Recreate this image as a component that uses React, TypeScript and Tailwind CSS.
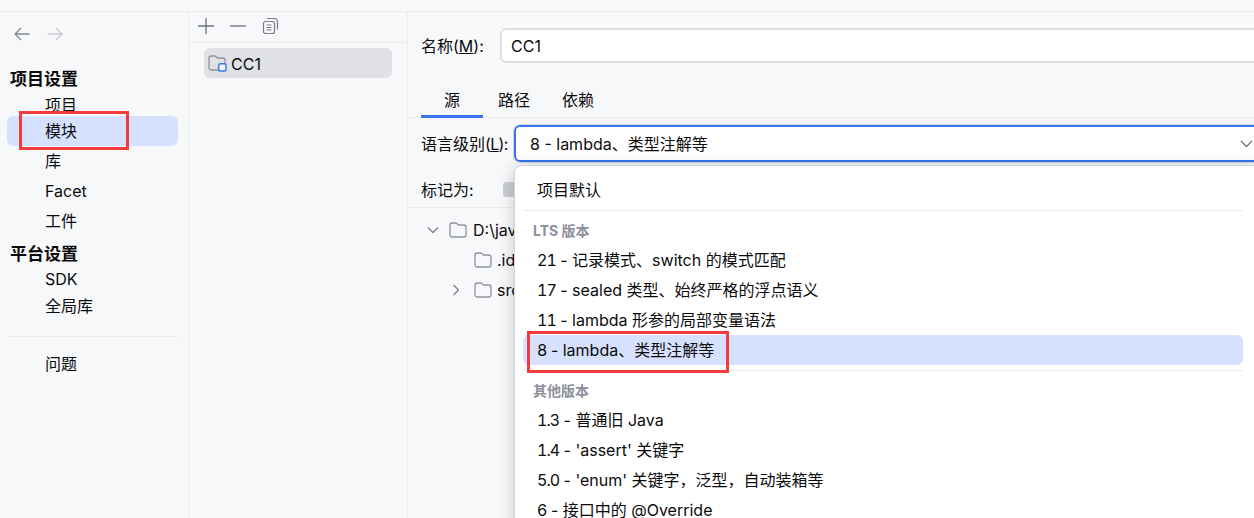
import React from "react";

function Folder({ badge = false }: { badge?: boolean }) {
  return (
    <svg width="19" height="17" viewBox="0 0 19 17" fill="none" className="shrink-0">
      <path d="M1 3.2C1 2 1.9 1 3.2 1h3.4c.6 0 1 .2 1.4.6L9.4 3h5.4C16.1 3 17 4 17 5.2v7.6c0 1.2-.9 2.2-2.2 2.2H3.2C1.9 15 1 14 1 12.8V3.2Z" stroke="#8f929e" strokeWidth="1.3" />
      {badge && <rect x="10.7" y="8.7" width="7.3" height="7.3" rx="1.8" fill="#f2f3f7" stroke="#3574f0" strokeWidth="1.4" />}
    </svg>
  );
}

function Row({ children, className = "" }: { children: React.ReactNode; className?: string }) {
  return <div className={`flex items-center mx-[7px] pl-[38px] ${className}`}>{children}</div>;
}

function Item({ num, children, className = "" }: { num?: string; children: React.ReactNode; className?: string }) {
  return (
    <div className={`h-[30px] flex items-center pl-[14px] whitespace-pre rounded-md ${className}`}>
      {num && <span className="tabular-nums tracking-[-1px]">{num}</span>}
      <span>{children}</span>
    </div>
  );
}

function Heading({ children }: { children: React.ReactNode }) {
  return <div className="h-[34px] pt-[5px] flex items-center pl-[10px] text-[14px] font-bold text-[#8c8f9a]">{children}</div>;
}

export default function App() {
  return (
    <div className="relative h-[518px] w-[1254px] overflow-hidden bg-[#f7f8fa] text-[16px] text-[#0b0b0c] [font-family:Inter,'Noto_Sans_CJK_SC',sans-serif]">
      <div className="h-[12px] border-b border-[#ebecf0]" />
      <div className="flex h-[506px]">
        {/* Sidebar */}
        <aside className="w-[189px] shrink-0 border-r border-[#ebecf0]">
          <div className="mt-[10px] h-6 flex items-center gap-[15px] pl-[13px]">
            <svg width="18" height="16" viewBox="0 0 18 16" fill="none" stroke="#858892" strokeWidth="1.3">
              <path d="M16.5 8H2M8 2 2 8l6 6" />
            </svg>
            <svg width="18" height="16" viewBox="0 0 18 16" fill="none" stroke="#c9ccd4" strokeWidth="1.3">
              <path d="M1.5 8H16M10 2l6 6-6 6" />
            </svg>
          </div>
          <div className="mt-[21px] h-6 pt-[2px] flex items-center pl-[10px] text-[17px] font-bold">项目设置</div>
          <Row className="h-[25px] pt-[2px]">项目</Row>
          <Row className="h-[30px] w-[171px] rounded-md bg-[#d5e1ff]">模块</Row>
          <Row className="h-[30px]">库</Row>
          <Row className="h-[30px]">Facet</Row>
          <Row className="h-[30px]">工件</Row>
          <div className="mt-[6px] h-6 pt-[2px] flex items-center pl-[10px] text-[17px] font-bold">平台设置</div>
          <Row className="h-[26px]">SDK</Row>
          <Row className="h-[28px]">全局库</Row>
          <div className="mt-[16px] mx-[7px] w-[171px] border-t border-[#ebecf0]" />
          <Row className="mt-[12px] h-[30px]">问题</Row>
        </aside>

        {/* Module list */}
        <section className="w-[219px] shrink-0 border-r border-[#ebecf0]">
          <div className="h-[31px] pb-[2px] flex items-center border-b border-[#ebecf0] pl-[8px]">
            <svg width="18" height="18" viewBox="0 0 18 18" fill="none" stroke="#6c707e" strokeWidth="1.3">
              <path d="M9 1v16M1 9h16" />
            </svg>
            <svg width="18" height="18" viewBox="0 0 18 18" fill="none" stroke="#6c707e" strokeWidth="1.3" className="ml-[14px]">
              <path d="M1 9h16" />
            </svg>
            <svg width="17" height="18" viewBox="0 0 17 18" fill="none" stroke="#7a7d89" strokeWidth="1.2" className="ml-[15px]">
              <rect x="1.5" y="4.5" width="11" height="12" rx="2" />
              <path d="M5 1.5h7.5a3 3 0 0 1 3 3v8M4.5 8h5M4.5 10.5h5M4.5 13h5" />
            </svg>
          </div>
          <div className="mt-[5px] ml-[15px] w-[188px] h-[30px] pt-[1px] rounded-md bg-[#dfe1e5] flex items-center gap-[4px] pl-[4px]">
            <Folder badge />
            CC1
          </div>
        </section>

        {/* Detail */}
        <main className="flex-1 min-w-0">
          <div className="mt-[16px] flex items-center pl-[13px]">
            <span className="w-[79px] whitespace-nowrap">名称(<span className="underline">M</span>):</span>
            <div className="flex-1 -mr-[10px] h-[35px] rounded-md border-2 border-[#dcdee4] bg-white flex items-center pl-[9px]">CC1</div>
          </div>
          <div className="h-[55px] flex items-end border-b border-[#ebecf0] pl-[13px]">
            <div className="h-[36px] -mb-px px-[23px] pt-[3px] flex items-center border-b-[3px] border-[#3574f0]">源</div>
            <div className="h-[36px] px-[15px] pt-[2px] flex items-center">路径</div>
            <div className="h-[36px] px-[17px] pt-[2px] flex items-center">依赖</div>
          </div>
          <div className="relative mt-[7px] flex items-center pl-[13px]">
            <span className="w-[93px] whitespace-nowrap">语言级别<span className="tracking-[-0.7px]">(<span className="underline">L</span>):</span></span>
            <div className="flex-1 -mr-[10px] h-[37px] rounded-md border-2 border-[#3574f0] outline outline-1 outline-[#d5d7de] bg-white flex items-center pl-[14px]">
              8 - lambda、类型注解等
            </div>
            <svg width="13" height="8" viewBox="0 0 13 8" fill="none" stroke="#6c707e" strokeWidth="1.3" className="absolute right-[1px] top-[15px]">
              <path d="M1 1l5.5 5.5L12 1" />
            </svg>
          </div>
          <div className="mt-[10px] h-[36px] flex items-center border-b border-[#ebecf0] pl-[13px]">
            <span className="w-[82px]">标记为:</span>
            <div className="h-[15px] w-[14px] rounded-sm bg-[#c9ccd2]" />
          </div>
          <div className="mt-[7px] h-[30px] flex items-center pl-[19px] gap-[10px]">
            <svg width="12" height="8" viewBox="0 0 12 8" fill="none" stroke="#7d808c" strokeWidth="1.3">
              <path d="M1 1.5 6 6.5l5-5" />
            </svg>
            <span className="flex items-center gap-[5px]"><Folder />D:\java</span>
          </div>
          <div className="h-[30px] flex items-center pl-[66px] gap-[4px]"><Folder />.idea</div>
          <div className="h-[30px] flex items-center pl-[44px] gap-[14px]">
            <svg width="8" height="12" viewBox="0 0 8 12" fill="none" stroke="#7d808c" strokeWidth="1.3">
              <path d="M1.5 1 6.5 6l-5 5" />
            </svg>
            <span className="flex items-center gap-[4px]"><Folder />src</span>
          </div>
        </main>
      </div>

      {/* Dropdown */}
      <div className="absolute left-[514px] top-[165px] right-[-10px] h-[380px] rounded-lg border border-[#d3d5db] bg-white pl-[8px] pr-[20px] pt-[9px] shadow-[0_2px_16px_rgba(0,0,0,0.2)]">
        <Item>项目默认</Item>
        <div className="mt-[5px] border-t border-[#ebecf0]" />
        <Heading>LTS 版本</Heading>
        <Item num="21">{" - 记录模式、switch 的模式匹配"}</Item>
        <Item num="17">{" - sealed 类型、始终严格的浮点语义"}</Item>
        <Item num="11">{" - lambda 形参的局部变量语法"}</Item>
        <Item num="8" className="bg-[#d5e1ff]">{" - lambda、类型注解等"}</Item>
        <div className="mt-[5px] border-t border-[#ebecf0]" />
        <Heading>其他版本</Heading>
        <Item num="1.3">{" - 普通旧 Java"}</Item>
        <Item num="1.4">{" - 'assert' 关键字"}</Item>
        <Item num="5.0">{" - 'enum' 关键字，泛型，自动装箱等"}</Item>
        <Item num="6">{" - 接口中的 @Override"}</Item>
      </div>

      {/* Annotations */}
      <div className="absolute left-[19px] top-[111px] h-[39px] w-[110px] border-[3px] border-[#f33b3b]" />
      <div className="absolute left-[527px] top-[331px] h-[42px] w-[202px] border-[3px] border-[#f33b3b]" />
    </div>
  );
}
